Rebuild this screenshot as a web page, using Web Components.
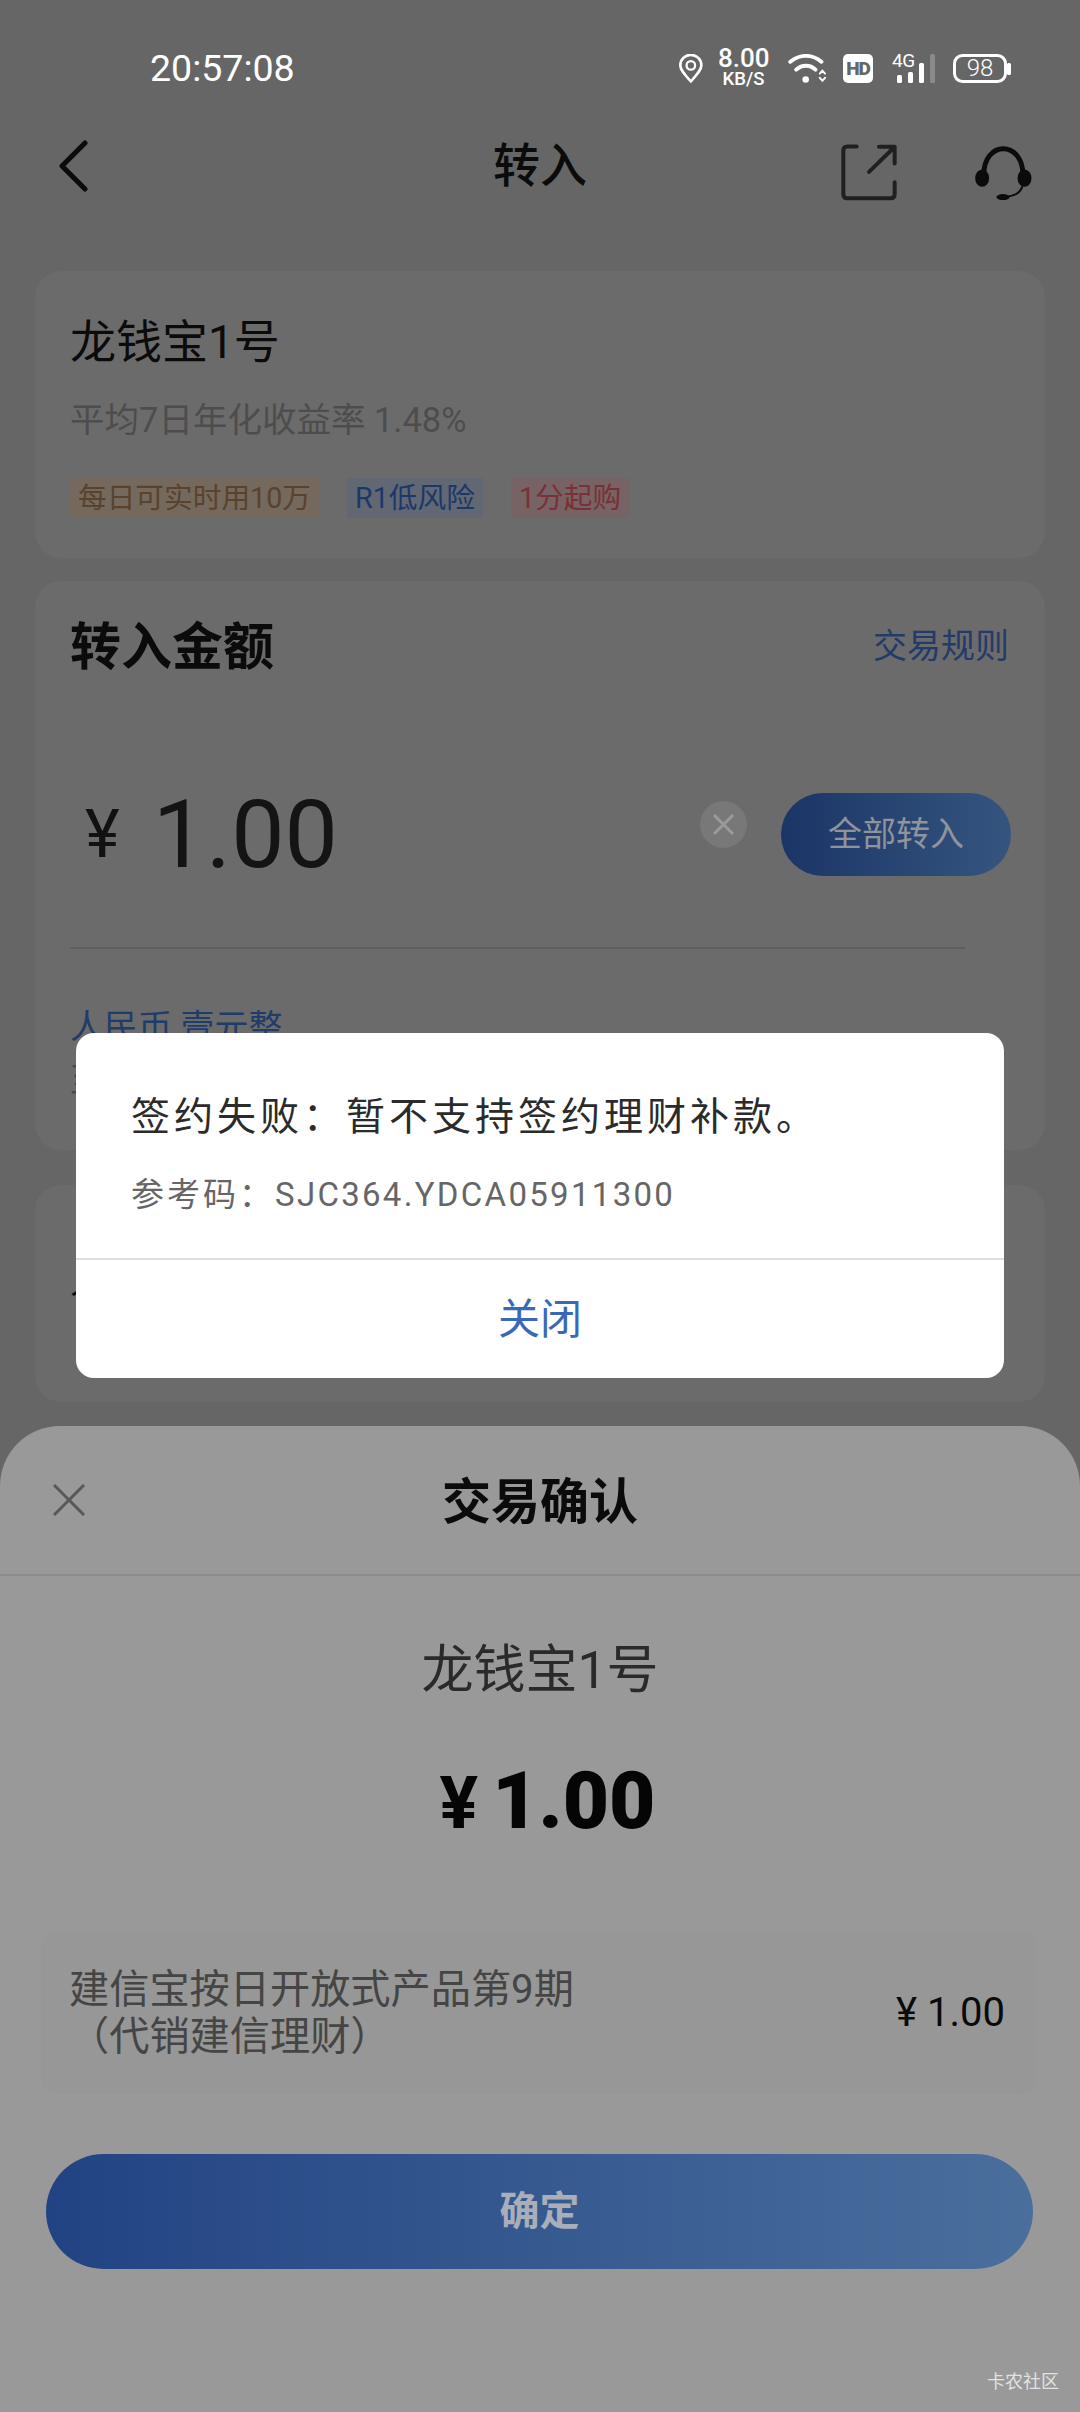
<!DOCTYPE html>
<html lang="zh">
<head>
<meta charset="utf-8">
<title>转入</title>
<style>
    html, body{ margin: 0; padding: 0; background: #666; }
    body{ font-family: Roboto, "Noto Sans CJK SC", sans-serif; }
    alert-dialog b{ font-weight: 400; letter-spacing: 2.3px; }
</style>
</head>
<body>
<bank-page>
    <status-bar></status-bar>
    <nav-bar>转入</nav-bar>
    <product-card></product-card>
    <amount-card></amount-card>
    <pay-card></pay-card>
    <confirm-sheet slot="over"></confirm-sheet>
    <alert-dialog slot="over">
        <span slot="title">签约失败：暂不支持签约理财补款。</span>
        <span slot="code">参考码：<b>SJC364.YDCA05911300</b></span>
        <span slot="action">关闭</span>
    </alert-dialog>
    <water-mark slot="over">卡农社区</water-mark>
</bank-page>

<script>
class BankPage extends HTMLElement{
    constructor(){
        super()
        this.attachShadow({mode: 'open'});
        this.shadowRoot.innerHTML = `
        <style>
            :host{
                display: flex;
                flex-direction: column;
                position: relative;
                width: 1080px;
                height: 2412px;
                overflow: hidden;
                background: #666;
            }
        </style>
        <slot></slot>
        <slot name="over"></slot>`;
    }
}

class StatusBar extends HTMLElement{
    constructor(){
        super()
        this.attachShadow({mode: 'open'});
        this.shadowRoot.innerHTML = `
        <style>
            :host{
                display: flex;
                align-items: center;
                height: 136px;
                padding: 0 69px 0 150px;
                box-sizing: border-box;
                color: #fff;
                flex: none;
            }
            svg{ display: block; flex: none; }
            .time{ font-size: 37.5px; line-height: 136px; margin-right: auto; }
            .net{ margin-left: 15px; width: 51px; text-align: center; font-weight: 500; }
            .net div{ font-size: 26px; line-height: 19px; }
            .net div + div{ font-size: 18.5px; line-height: 17px; margin-top: 3px; }
            .hd{
                margin-left: 16px;
                width: 30px;
                height: 29px;
                border-radius: 5px;
                background: #fff;
                color: #666;
                font-size: 19px;
                font-weight: 900;
                line-height: 29px;
                text-align: center;
                letter-spacing: -1px;
            }
            .sig{ position: relative; margin-left: 19px; width: 43px; height: 29px; }
            .sig span{ position: absolute; left: 0; top: -1px; font-size: 19px; line-height: 16px; letter-spacing: -.5px; }
            .batt{ position: relative; margin-left: 18px; width: 58px; height: 29px; }
            .batt span{
                position: absolute;
                left: 0;
                top: 0;
                width: 54px;
                font-size: 24px;
                font-weight: 300;
                line-height: 29px;
                text-align: center;
            }
        </style>
        <div class="time">20:57:08</div>
        <svg width="24" height="29" viewBox="117 75 73 87" fill="none" stroke="#fff">
            <path d="M153 158C133 135 121 122 121 109a32 32 0 0 1 64 0C185 122 173 135 153 158Z" stroke-width="8" stroke-linejoin="round"/>
            <circle cx="153" cy="109" r="13" stroke-width="7"/>
        </svg>
        <div class="net"><div>8.00</div><div>KB/S</div></div>
        <svg style="margin-left:19px" width="39" height="29" viewBox="443 75 119 87" fill="none" stroke="#fff" stroke-linecap="round">
            <path d="M450 98C480 74 516 74 545 98" stroke-width="12"/>
            <path d="M468 122C486 106 510 106 527 122" stroke-width="12"/>
            <circle cx="497" cy="152" r="10" fill="#fff" stroke="none"/>
            <path d="M540 134L548 125L556 134M540 147L548 156L556 147" stroke-width="6"/>
        </svg>
        <div class="hd">HD</div>
        <div class="sig">
            <span>4G</span>
            <svg width="43" height="29" viewBox="0 0 43 29">
                <rect x="5" y="21" width="5" height="8" rx="1.5" fill="#fff"/>
                <rect x="16" y="18" width="5" height="11" rx="1.5" fill="#fff"/>
                <rect x="27" y="9" width="5" height="20" rx="1.5" fill="#fff"/>
                <rect x="38" y="0" width="5" height="29" rx="1.5" fill="#8a8a8a"/>
            </svg>
        </div>
        <div class="batt">
            <svg width="58" height="29" viewBox="0 0 58 29" fill="none">
                <rect x="1.5" y="1.5" width="51" height="26" rx="8" stroke="#fff" stroke-width="3"/>
                <rect x="54" y="9" width="4" height="12" rx="1.5" fill="#fff"/>
            </svg>
            <span>98</span>
        </div>`;
    }
}

class NavBar extends HTMLElement{
    constructor(){
        super()
        this.attachShadow({mode: 'open'});
        this.shadowRoot.innerHTML = `
        <style>
            :host{
                display: grid;
                grid-template-columns: 1fr auto 1fr;
                grid-template-rows: 60px;
                align-items: center;
                height: 60px;
                margin-bottom: 75px;
                flex: none;
                color: #0b0b0b;
            }
            .title{ font-size: 47px; font-weight: 500; line-height: 60px; }
            .left{ padding-left: 58px; }
            .right{ display: flex; justify-content: flex-end; align-items: flex-start; align-self: start; padding: 8px 48px 0 0; }
            svg{ display: block; }
        </style>
        <div class="left">
            <svg width="30" height="52" viewBox="0 0 30 52" fill="none" stroke="#0b0b0b" stroke-width="5" stroke-linecap="round" stroke-linejoin="round">
                <path d="M27 3L4 26L27 49"/>
            </svg>
        </div>
        <div class="title"><slot></slot></div>
        <div class="right">
            <svg width="56" height="57" viewBox="184 72 168 170" fill="none" stroke="#202020" stroke-width="12" stroke-linecap="round" stroke-linejoin="round">
                <path d="M231 79H203Q191 79 191 91V222Q191 234 203 234H333Q345 234 345 222V186"/>
                <path d="M268 155L343 82M298 80H345V130"/>
            </svg>
            <svg style="margin:2px 0 0 78px" width="57" height="54" viewBox="584 78 171 163" fill="#0b0b0b">
                <path d="M610 165C610 60 728 60 728 165" fill="none" stroke="#0b0b0b" stroke-width="15"/>
                <ellipse cx="605" cy="175" rx="21" ry="26"/>
                <ellipse cx="733" cy="175" rx="21" ry="26"/>
                <path d="M727 200C720 218 705 228 685 230" fill="none" stroke="#0b0b0b" stroke-width="6"/>
                <ellipse cx="668" cy="232" rx="20" ry="9"/>
            </svg>
        </div>`;
    }
}

class InfoCard extends HTMLElement{
    constructor(){
        super()
        this.attachShadow({mode: 'open'});
        this.shadowRoot.innerHTML = `
        <style>
            :host{
                display: block;
                box-sizing: border-box;
                flex: none;
                margin: 0 35px;
                background: #6b6b6b;
                border-radius: 26px;
            }
        </style>
        <slot></slot>`;
    }
}

class TagChip extends HTMLElement{
    constructor(){
        super()
        this.attachShadow({mode: 'open'});
        this.shadowRoot.innerHTML = `
        <style>
            :host{
                display: block;
                height: 40px;
                padding: 0 8px;
                font-size: 28.7px;
                line-height: 40px;
                border-radius: 2px;
            }
            :host([tone=amber]){ background: #74695c; color: #59432e; }
            :host([tone=blue]){ background: #626774; color: #1c3868; }
            :host([tone=red]){ background: #776363; color: #7a3036; }
        </style>
        <slot></slot>`;
    }
}

class ProductCard extends HTMLElement{
    constructor(){
        super()
        this.attachShadow({mode: 'open'});
        this.shadowRoot.innerHTML = `
        <style>
            :host{ display: block; flex: none; margin-bottom: 23px; }
            info-card{ height: 287px; padding: 46px 35px 0; }
            .name{ font-size: 46px; line-height: 50px; color: #0b0b0b; }
            .rate{ font-size: 34.5px; line-height: 44px; margin-top: 31px; color: #4d4d4d; }
            .tags{ display: flex; gap: 28px; margin-top: 36px; }
        </style>
        <info-card>
            <div class="name">龙钱宝1号</div>
            <div class="rate">平均7日年化收益率 1.48%</div>
            <div class="tags">
                <tag-chip tone="amber">每日可实时用10万</tag-chip>
                <tag-chip tone="blue">R1低风险</tag-chip>
                <tag-chip tone="red">1分起购</tag-chip>
            </div>
        </info-card>`;
    }
}

class AmountCard extends HTMLElement{
    constructor(){
        super()
        this.attachShadow({mode: 'open'});
        this.shadowRoot.innerHTML = `
        <style>
            :host{ display: block; flex: none; margin-bottom: 35px; }
            info-card{ height: 569px; padding: 32px 34px 0 35px; }
            .head{ display: flex; justify-content: space-between; align-items: center; height: 60px; }
            .title{ font-size: 51px; font-weight: 700; color: #0b0b0b; }
            .rule{ font-size: 34px; margin-right: 2px; color: #233b68; }
            .row{ display: flex; align-items: center; height: 83px; margin-top: 120px; }
            .cur{ font-size: 66px; padding-left: 15px; color: #111; }
            .val{ font-size: 95px; font-weight: 400; margin-left: 33px; color: #141414; }
            .clear{
                display: flex;
                align-items: center;
                justify-content: center;
                width: 47px;
                height: 47px;
                margin: 0 34px 20px auto;
                border-radius: 50%;
                background: #787878;
            }
            .all{
                width: 230px;
                height: 83px;
                border-radius: 42px;
                background: linear-gradient(90deg, #1b3566, #35557f);
                color: #8f949c;
                font-size: 34px;
                line-height: 83px;
                text-align: center;
            }
            .line{ height: 2px; margin: 71px 46px 0 0; background: #5f5f5f; }
            .cn{ font-size: 34px; line-height: 44px; margin-top: 56px; color: #213c69; }
            .hint{ font-size: 34px; line-height: 40px; margin-top: 11px; color: #4a4a4a; }
        </style>
        <info-card>
            <div class="head"><div class="title">转入金额</div><div class="rule">交易规则</div></div>
            <div class="row">
                <div class="cur">¥</div>
                <div class="val">1.00</div>
                <div class="clear">
                    <svg width="23" height="23" viewBox="0 0 23 23" stroke="#9a9a9a" stroke-width="3"><path d="M2 2L21 21M21 2L2 21"/></svg>
                </div>
                <div class="all">全部转入</div>
            </div>
            <div class="line"></div>
            <div class="cn">人民币 壹元整</div>
            <div class="hint">至</div>
        </info-card>`;
    }
}

class PayCard extends HTMLElement{
    constructor(){
        super()
        this.attachShadow({mode: 'open'});
        this.shadowRoot.innerHTML = `
        <style>
            :host{ display: block; flex: none; }
            info-card{ height: 217px; padding: 75px 35px 0; }
            div{ font-size: 34px; line-height: 44px; color: #0b0b0b; }
        </style>
        <info-card><div>人</div></info-card>`;
    }
}

class ConfirmSheet extends HTMLElement{
    constructor(){
        super()
        this.attachShadow({mode: 'open'});
        this.shadowRoot.innerHTML = `
        <style>
            :host{
                display: flex;
                flex-direction: column;
                position: absolute;
                left: 0;
                right: 0;
                bottom: 0;
                height: 986px;
                background: #999;
                border-radius: 60px 60px 0 0;
                color: #0b0b0b;
            }
            .head{
                display: grid;
                grid-template-columns: 1fr auto 1fr;
                align-items: center;
                height: 148px;
                border-bottom: 2px solid #8c8c8c;
            }
            .head svg{ display: block; margin-left: 53px; }
            .title{ font-size: 49px; font-weight: 700; padding-bottom: 6px; }
            .name{ font-size: 52px; line-height: 60px; margin-top: 65px; text-align: center; color: #2a2a2a; }
            .sum{
                display: flex;
                justify-content: center;
                align-items: baseline;
                gap: 14px;
                height: 90px;
                line-height: 90px;
                margin-top: 55px;
                padding-left: 15px;
                font-weight: 700;
                color: #050505;
            }
            .sum span{ font-size: 72px; }
            .sum b{ font-size: 80px; }
            .detail{
                display: flex;
                justify-content: space-between;
                align-items: center;
                box-sizing: border-box;
                height: 163px;
                margin: 85px 44px 0 41px;
                padding: 0 31px 0 28px;
                border-radius: 16px;
                background: #979797;
            }
            .txt{ font-size: 40.2px; line-height: 47px; color: #454545; }
            .money{ font-size: 40px; color: #0a0a0a; }
            .ok{
                height: 115px;
                margin: 60px 47px 0 46px;
                border-radius: 58px;
                background: linear-gradient(90deg, #224383, #4a6f9d);
                color: #a9aeb8;
                font-size: 40px;
                font-weight: 700;
                line-height: 115px;
                text-align: center;
            }
        </style>
        <div class="head">
            <svg width="32" height="32" viewBox="0 0 32 32" stroke="#585858" stroke-width="3"><path d="M1 1L31 31M31 1L1 31"/></svg>
            <div class="title">交易确认</div>
        </div>
        <div class="name">龙钱宝1号</div>
        <div class="sum"><span>¥</span><b>1.00</b></div>
        <div class="detail">
            <div class="txt">建信宝按日开放式产品第9期<br>（代销建信理财）</div>
            <div class="money">¥ 1.00</div>
        </div>
        <div class="ok">确定</div>`;
    }
}

class AlertDialog extends HTMLElement{
    constructor(){
        super()
        this.attachShadow({mode: 'open'});
        this.shadowRoot.innerHTML = `
        <style>
            :host{
                display: flex;
                flex-direction: column;
                position: absolute;
                left: 76px;
                top: 1033px;
                width: 928px;
                height: 345px;
                background: #fff;
                border-radius: 18px;
            }
            .body{ box-sizing: border-box; height: 227px; padding: 57px 40px 0 55px; border-bottom: 2px solid #ddd; }
            .title{ font-size: 39px; line-height: 54px; letter-spacing: 4px; color: #2b2b2b; }
            .code{ font-size: 33px; line-height: 44px; margin-top: 29px; letter-spacing: 3px; color: #666; }
            .foot{ flex: 1; display: flex; align-items: center; justify-content: center; font-size: 42px; color: #3a68b8; padding-bottom: 8px; }
        </style>
        <div class="body">
            <div class="title"><slot name="title"></slot></div>
            <div class="code"><slot name="code"></slot></div>
        </div>
        <div class="foot"><slot name="action"></slot></div>`;
    }
}

class WaterMark extends HTMLElement{
    constructor(){
        super()
        this.attachShadow({mode: 'open'});
        this.shadowRoot.innerHTML = `
        <style>
            :host{
                display: block;
                position: absolute;
                right: 21px;
                bottom: 18px;
                font-size: 18px;
                line-height: 24px;
                color: #e2e2e2;
            }
        </style>
        <slot></slot>`;
    }
}

window.customElements.define('bank-page', BankPage);
window.customElements.define('status-bar', StatusBar);
window.customElements.define('nav-bar', NavBar);
window.customElements.define('info-card', InfoCard);
window.customElements.define('tag-chip', TagChip);
window.customElements.define('product-card', ProductCard);
window.customElements.define('amount-card', AmountCard);
window.customElements.define('pay-card', PayCard);
window.customElements.define('confirm-sheet', ConfirmSheet);
window.customElements.define('alert-dialog', AlertDialog);
window.customElements.define('water-mark', WaterMark);
</script>
</body>
</html>
